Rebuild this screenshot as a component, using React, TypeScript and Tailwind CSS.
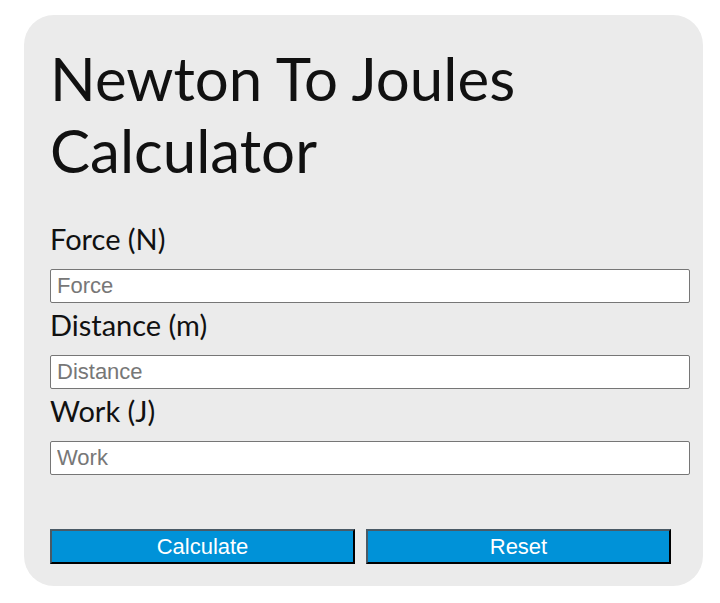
import { useState } from 'react'

const fields = [
  { key: 'force', label: 'Force (N)', placeholder: 'Force' },
  { key: 'distance', label: 'Distance (m)', placeholder: 'Distance' },
  { key: 'work', label: 'Work (J)', placeholder: 'Work' },
]

export default function App() {
  const [values, setValues] = useState<Record<string, string>>({ force: '', distance: '', work: '' })

  const calculate = () => {
    const f = parseFloat(values.force)
    const d = parseFloat(values.distance)
    const w = parseFloat(values.work)
    if (!isNaN(f) && !isNaN(d)) setValues({ ...values, work: String(f * d) })
    else if (!isNaN(w) && !isNaN(f) && f !== 0) setValues({ ...values, distance: String(w / f) })
    else if (!isNaN(w) && !isNaN(d) && d !== 0) setValues({ ...values, force: String(w / d) })
  }

  return (
    <div className="min-h-[603px] bg-white pt-[15px] pl-[24px]">
      <div className="w-[679px] h-[571px] rounded-[30px] bg-[#ebebeb] pl-[26px] pr-[13px] pt-[27px] font-['Segoe_UI','Lato','Noto_Sans',sans-serif] text-[#111]">
        <h1 className="text-[60px] leading-[72px] font-normal">
          Newton To Joules
          <br />
          Calculator
        </h1>

        <div className="mt-[37px]">
          {fields.map((f) => (
            <div key={f.key}>
              <label htmlFor={f.key} className="block text-[29px] leading-[32px] mb-[14px] mt-[6px]">
                {f.label}
              </label>
              <input
                id={f.key}
                value={values[f.key]}
                onChange={(e) => setValues({ ...values, [f.key]: e.target.value })}
                placeholder={f.placeholder}
                className="block w-full h-[34px] bg-white border border-[#767676] rounded-[2px] px-[6px] text-[22px] font-['Liberation_Sans',Arial,sans-serif] placeholder:text-[#777] outline-none"
              />
            </div>
          ))}
        </div>

        <div className="mt-[54px] flex gap-[11px] w-[621px]">
          <button
            onClick={calculate}
            className="flex-1 h-[35px] bg-[#0092d8] text-white text-[22px] leading-none font-['Liberation_Sans',Arial,sans-serif] border-2 border-t-[#4a5a66] border-l-[#4a5a66] border-r-black border-b-black"
          >
            Calculate
          </button>
          <button
            onClick={() => setValues({ force: '', distance: '', work: '' })}
            className="flex-1 h-[35px] bg-[#0092d8] text-white text-[22px] leading-none font-['Liberation_Sans',Arial,sans-serif] border-2 border-t-[#4a5a66] border-l-[#4a5a66] border-r-black border-b-black"
          >
            Reset
          </button>
        </div>
      </div>
    </div>
  )
}
